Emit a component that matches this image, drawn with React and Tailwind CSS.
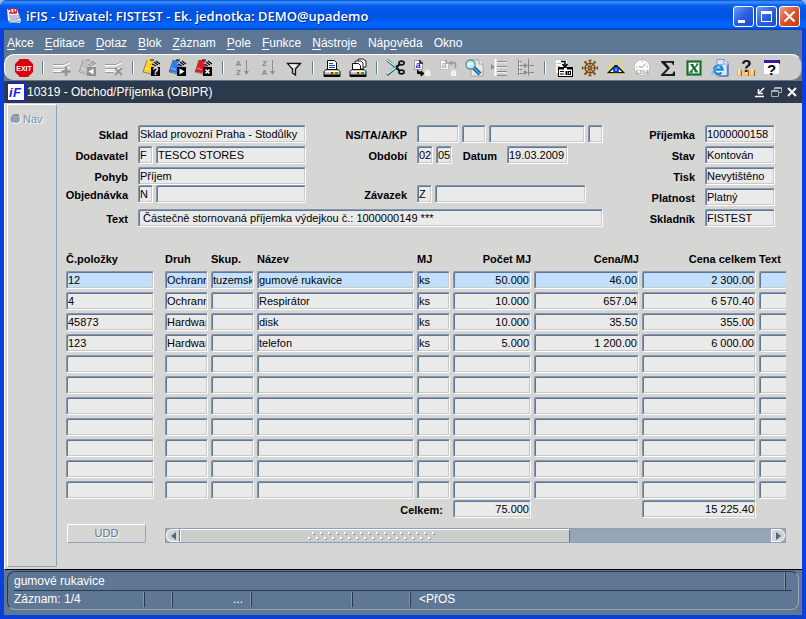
import React from 'react';

const menu = [
  ['', 'A', 'kce'],
  ['', 'E', 'ditace'],
  ['', 'D', 'otaz'],
  ['', 'B', 'lok'],
  ['', 'Z', 'áznam'],
  ['', 'P', 'ole'],
  ['', 'F', 'unkce'],
  ['', 'N', 'ástroje'],
  ['Náp', 'o', 'věda'],
  ['Okno', '', ''],
];

const rows = [
  ['12', 'Ochranné', 'tuzemsko', 'gumové rukavice', 'ks', '50.000', '46.00', '2 300.00', ''],
  ['4', 'Ochranné', '', 'Respirátor', 'ks', '10.000', '657.04', '6 570.40', ''],
  ['45873', 'Hardware', '', 'disk', 'ks', '10.000', '35.50', '355.00', ''],
  ['123', 'Hardware', '', 'telefon', 'ks', '5.000', '1 200.00', '6 000.00', ''],
  ...Array.from({ length: 7 }, () => ['', '', '', '', '', '', '', '', '']),
];

const columns = ['Č.položky', 'Druh', 'Skup.', 'Název', 'MJ', 'Počet MJ', 'Cena/MJ', 'Cena celkem', 'Text'];

const fieldClass =
  'block h-[18px] min-w-0 rounded-[2px] border border-t-[#8797ab] border-l-[#8797ab] border-r-white border-b-white px-px text-[11px] leading-[14px] text-black outline-none shadow-[inset_1px_1px_0_#5f7897,inset_-1px_-1px_0_#c9c9c9]';

function Field({ className = '', blue = false, ...props }) {
  return <input readOnly className={`${fieldClass} ${blue ? 'bg-[#c2dffb]' : 'bg-[#ebeaeb]'} ${className}`} {...props} />;
}

function Label({ className = '', ...props }) {
  return <label className={`block shrink-0 pt-[3px] text-right text-[11px] leading-[15px] font-bold whitespace-nowrap ${className}`} {...props} />;
}

function Svg({ children, size = 20, className = '' }) {
  return (
    <svg width={size} height={size} viewBox="0 0 20 20" className={`block shrink-0 ${className}`} aria-hidden="true">
      {children}
    </svg>
  );
}

const glyph = { fontFamily: '"Liberation Sans", Arial, sans-serif', fontWeight: 700 };

const ExitIcon = () => (
  <Svg>
    <path d="M6 1h8l5 5v8l-5 5H6l-5-5V6z" fill="#d9000f" />
    <text x="10" y="12.500" fontSize="7" textAnchor="middle" fill="#fff" style={glyph}>EXIT</text>
  </Svg>
);

function RecordIcon({ cross }) {
  return (
    <Svg>
      <path d="M1 7h12l5-3v9l-6 2H1z" fill="#dcdcdc" />
      <path d="M1 6.500h11l6-3M1 10.500h10l7-3M1 14.500h9" stroke="#9a9a9a" fill="none" />
      <path d="M1 7.500h11l6-3M1 11.500h10l7-3" stroke="#fff" fill="none" />
      <path d="M1 13h9v1H1z" fill="#fff" />
      {cross ? (
        <path d="M11 10l7 7M18 10l-7 7" stroke="#929292" strokeWidth="2" />
      ) : (
        <path d="M14 9v9M9.500 13.500h9" stroke="#929292" strokeWidth="2.500" />
      )}
    </Svg>
  );
}

function FolderIcon({ color, mark, disabled }) {
  const ink = disabled ? '#8f8f8f' : '#000';
  const edge = disabled ? '#8f8f8f' : '#6a5f48';
  return (
    <Svg>
      <path d="M5 2h5l8 5v2h-8l-1 6-8-1z" fill={color} />
      <path d="M5 2L1 14l8 2" fill="none" stroke={edge} strokeWidth="0.700" />
      <path d="M9 6l3-3 5 1 2 3v2h-6z" fill={disabled ? '#d8d8d8' : '#c9c9c9'} />
      <path d="M8 2h4M12 4l4 3M14 3l4 3M10 6l4 2" stroke={ink} strokeWidth="1.100" />
      <path d="M3 10l5 2" stroke="#fff" strokeWidth="0.900" opacity="0.600" />
      <rect x="9" y="9" width="9" height="9" fill={ink} shapeRendering="crispEdges" />
      {mark === '?' && <text x="13.500" y="17" fontSize="10" textAnchor="middle" fill="#fff" style={glyph}>?</text>}
      {mark === 'right' && <path d="M11.500 10.500l5 3-5 3z" fill="#fff" />}
      {mark === 'left' && <path d="M15.500 10.500l-5 3 5 3z" fill="#fff" />}
      {mark === 'x' && <path d="M11.500 11.500l4 4M15.500 11.500l-4 4" stroke="#fff" strokeWidth="1.500" />}
    </Svg>
  );
}

function SortIcon({ top, bottom }) {
  return (
    <Svg>
      <g fill="#858585" style={glyph} fontSize="8">
        <text x="6.500" y="7.500" textAnchor="middle">{top}</text>
        <text x="6.500" y="17" textAnchor="middle">{bottom}</text>
      </g>
      <path d="M14 2h1v11h2l-2.500 4-2.500-4h2z" fill="#8e8e8e" />
    </Svg>
  );
}

const FilterIcon = () => (
  <Svg>
    <path d="M3.500 5.500h13l-5 5.500v6l-3-2v-4z" fill="#d8d8d8" stroke="#111" strokeWidth="1.300" />
    <path d="M5 6.500h8L9 10z" fill="#fff" />
  </Svg>
);

function PrinterIcon({ stack }) {
  return (
    <Svg>
      {stack && <path d="M10 1h5l3 2v6h-6z" fill="#fff" stroke="#222" />}
      {stack && <path d="M7 3h6l2 2v6H8z" fill="#fff" stroke="#222" />}
      <path d={stack ? 'M4.500 5.500h6l2 2v5h-8z' : 'M5.500 2.500h7l2 2v8h-9z'} fill="#fff" stroke="#111" />
      {!stack && <path d="M7 5.500h4M7 7.500h6M7 9.500h6" stroke="#2a3bd0" />}
      <path d="M4 11.500h12l2 2v5H2v-5z" fill="#c6c6c6" stroke="#111" />
      <path d="M3 13.500h14" stroke="#fff" />
      <rect x="9" y="14" width="2" height="2" fill="#e00" />
      <rect x="11" y="14" width="2" height="2" fill="#ee0" />
      <rect x="13" y="14" width="3" height="2" fill="#0b0" />
      <path d="M2 17.500h16" stroke="#000" strokeWidth="2" />
    </Svg>
  );
}

const CutIcon = () => (
  <Svg>
    <path d="M1 2l11 9M1 17L12 8" stroke="#1d6b6b" strokeWidth="2.800" />
    <path d="M1 2l11 8M1 16l11-8" stroke="#d6ffff" strokeWidth="1.300" />
    <path d="M10 9.500l4-3.500M10 9.500l4 3.500" stroke="#111" strokeWidth="2.200" />
    <ellipse cx="15.500" cy="5" rx="2.600" ry="1.900" fill="none" stroke="#111" strokeWidth="1.600" />
    <ellipse cx="15.500" cy="14" rx="2.600" ry="1.900" fill="none" stroke="#111" strokeWidth="1.600" />
  </Svg>
);

function CopyIcon({ disabled }) {
  return (
    <Svg>
      <path d="M2.500 2.500h6l2 2v7h-8z" fill="#fff" stroke={disabled ? '#bbb' : '#999'} />
      <path d="M8 2v3h3" fill="none" stroke={disabled ? '#999' : '#111'} strokeWidth="1.500" />
      <text x="6" y="10" fontSize="9" textAnchor="middle" fill={disabled ? '#a8a8a8' : '#1420ff'} style={glyph}>a</text>
      {disabled ? (
        <path d="M17.500 10V5h-5M14 3l-2 2 2 2" fill="none" stroke="#999" strokeWidth="1.500" />
      ) : (
        <path d="M5.500 12v3.500h5M9 13l3 2.500L9 18z" fill="#000" stroke="#000" />
      )}
      <text x="15.500" y="18" fontSize="10" textAnchor="middle" fill="#fff" style={glyph}>a</text>
    </Svg>
  );
}

const FindIcon = () => (
  <Svg>
    <path d="M7 2h8l4 4v12H7z" fill="#e9e7df" stroke="#9a9a92" strokeWidth="0.800" />
    <path d="M15 2v4h4" fill="#fff" stroke="#999" />
    <path d="M9 9l7 7" stroke="#125a9c" strokeWidth="4" />
    <path d="M9 9l7 7" stroke="#49aaf0" strokeWidth="1.500" />
    <circle cx="6.500" cy="6.500" r="4.500" fill="#bdf0fa" stroke="#5b8c9a" strokeWidth="1.300" />
    <path d="M4 6h5" stroke="#fff" strokeWidth="2" />
  </Svg>
);

const IndentIcon = () => (
  <Svg>
    <path d="M5.500 1v17" stroke="#fff" strokeWidth="2" />
    <path d="M1 6l4 3-4 3z" fill="#929292" />
    <path d="M7 3.500h10M7 8.500h10M7 13.500h10M7 17.500h10" stroke="#8a8a8a" />
    <path d="M7 4.500h10M7 9.500h10M7 14.500h10" stroke="#eee" />
  </Svg>
);

const LevelsIcon = () => (
  <Svg>
    <path d="M2.500 1v17M12.500 1v17" stroke="#8a8a8a" />
    <path d="M3.500 1v17" stroke="#eee" />
    <path d="M3 3.500h3M3 7.500h5M3 11.500h3M3 15.500h5M13 7.500h5M13 14.500h5" stroke="#8a8a8a" />
    <path d="M8 5l4 2.500L8 10zM8 12l4 2.500L8 17z" fill="#8a8a8a" />
  </Svg>
);

const ListIcon = () => (
  <Svg>
    <rect x="2" y="1" width="11" height="14" fill="#fff" />
    <path d="M1 1.500h12" stroke="#8bd3ee" />
    <path d="M3 5.500h4M3 8.500h3M3 11.500h1" stroke="#bbb" />
    <path d="M7 3.500h4v4M8.500 6l2.500 3 2.500-3" fill="none" stroke="#000" strokeWidth="1.500" />
    <rect x="4.500" y="9.500" width="14" height="9" fill="#fff" stroke="#000" />
    <path d="M5 10.500h5M13 10.500h5" stroke="#000" strokeWidth="2" />
    <path d="M6 13.500h4M6 16h4" stroke="#000" />
    <rect x="11.500" y="13" width="2" height="4" fill="#000" />
    <rect x="14.500" y="13.500" width="2" height="3" fill="none" stroke="#000" />
  </Svg>
);

const WheelIcon = () => (
  <Svg>
    <circle cx="10" cy="10" r="4.800" fill="none" stroke="#7b4d08" strokeWidth="1.600" />
    <path d="M10 2v16M2 10h16M5 4l10 12M15 4L5 16" stroke="#7b4d08" strokeWidth="1.100" />
    <path d="M8.500 2.500h3M8.500 17.500h3M2.500 8.500v3M17.500 8.500v3M4 4h2v2M16 4h-2v2M4 16h2v-2M16 16h-2v-2" fill="none" stroke="#7b4d08" strokeWidth="1.300" />
    <circle cx="10" cy="10" r="2" fill="#7b4d08" />
    <rect x="9.500" y="9.500" width="1" height="1" fill="#fff" />
  </Svg>
);

const EyeIcon = () => (
  <Svg>
    <path d="M10 2v3M5 4l2 3M15 4l-2 3M2 8l3 2M18 8l-3 2" stroke="#f0e020" strokeWidth="1.500" />
    <path d="M1 15l8-8h2l8 8z" fill="#111" />
    <path d="M4 14l4-4 2-1 2 1 4 4z" fill="#fff" />
    <circle cx="10" cy="11.500" r="3.200" fill="#1235dd" />
    <circle cx="10" cy="11.500" r="1.300" fill="#1ce0ff" />
    <path d="M1 15.500h18" stroke="#c8b400" strokeWidth="0.800" />
  </Svg>
);

const ClockIcon = () => (
  <Svg>
    <circle cx="10" cy="9.500" r="8" fill="#fbfbfb" stroke="#b9b9b9" />
    <path d="M10 9.500l4-4M10 9.500L7 8M10 3v1M4 9h1M15 9h1" stroke="#999" />
    <text x="10" y="16" fontSize="6" textAnchor="middle" fill="#999" style={glyph}>1314</text>
  </Svg>
);

const SumIcon = () => (
  <Svg>
    <path d="M3 3h13v4h-1.200q-.3-2.300-2-2.300H7.500L12 10l-5.500 6h7q1.500 0 2-2.500H17V18H3v-1.200L9 10.500 3 4z" fill="#1c1c1c" />
  </Svg>
);

const ExcelIcon = () => (
  <Svg>
    <rect x="3.500" y="3.500" width="13" height="13" fill="#fff" stroke="#17702a" strokeWidth="2.200" />
    <rect x="2.500" y="2.500" width="15" height="15" fill="none" stroke="#5c9c66" strokeDasharray="1 1" />
    <path d="M6 6h3l5 8h-3z" fill="#17702a" />
    <path d="M14 6l-3 3.500M9 11l-3 3h3" fill="none" stroke="#17702a" strokeWidth="1.300" />
    <path d="M12 6h2M11 14h3" stroke="#17702a" />
  </Svg>
);

const BrowserIcon = () => (
  <Svg>
    <path d="M7 1.500h7l4.500 4V18H7z" fill="#dfe6f4" stroke="#7d93c4" />
    <path d="M14 2v4h4" fill="#fff" stroke="#7d93c4" />
    <path d="M17.500 7v11H9" fill="none" stroke="#5e7cc0" strokeWidth="1.500" />
    <circle cx="8.500" cy="11.500" r="5" fill="#e8f6ff" />
    <path d="M4 11.500h8.500a4.200 4.200 0 1 0-1 3" fill="none" stroke="#1b83d2" strokeWidth="2.400" />
    <path d="M2.500 16.500q-2-1.500 4-7 5-4 7-3" fill="none" stroke="#5fb9ee" strokeWidth="1.300" />
  </Svg>
);

const HelpPeopleIcon = () => (
  <Svg>
    {[1, 8, 14].map((x) => (
      <g key={x}>
        <rect x={x} y="12" width="5" height="6" fill="#f2b45e" />
        <rect x={x + 1} y="11" width="2" height="6" fill="#ffe0ae" />
        <path d={`M${x + 4.5} 12v6`} stroke="#a66a16" />
      </g>
    ))}
    <text x="10.500" y="14" fontSize="17" textAnchor="middle" fill="#111" style={glyph}>?</text>
  </Svg>
);

const HelpWindowIcon = () => (
  <Svg>
    <rect x="2" y="2" width="15" height="14" fill="#fff" />
    <rect x="2" y="2" width="15" height="3" fill="#4314a8" />
    <path d="M17.500 2v4" stroke="#222" />
    <text x="9.500" y="17" fontSize="15" textAnchor="middle" fill="#000" style={glyph}>?</text>
  </Svg>
);

const toolGroups = [
  [['Konec', <ExitIcon />]],
  [
    ['Vložit záznam', <RecordIcon />],
    ['Předchozí', <FolderIcon color="#c0c0c0" mark="left" disabled />],
    ['Smazat záznam', <RecordIcon cross />],
  ],
  [
    ['Zadat dotaz', <FolderIcon color="#ffd21e" mark="?" />],
    ['Provést dotaz', <FolderIcon color="#2a7cf0" mark="right" />],
    ['Zrušit dotaz', <FolderIcon color="#e01828" mark="x" />],
  ],
  [
    ['Seřadit vzestupně', <SortIcon top="A" bottom="Z" />],
    ['Seřadit sestupně', <SortIcon top="Z" bottom="A" />],
    ['Filtr', <FilterIcon />],
  ],
  [
    ['Tisk', <PrinterIcon />],
    ['Tisk sestav', <PrinterIcon stack />],
  ],
  [
    ['Vyjmout', <CutIcon />],
    ['Kopírovat', <CopyIcon />],
    ['Vložit', <CopyIcon disabled />],
    ['Hledat', <FindIcon />],
    ['Seznam', <IndentIcon />],
    ['Úrovně', <LevelsIcon />],
  ],
  [
    ['Seznam hodnot', <ListIcon />],
    ['Navigace', <WheelIcon />],
    ['Zobrazit', <EyeIcon />],
    ['Kalendář', <ClockIcon />],
    ['Součet', <SumIcon />],
    ['Excel', <ExcelIcon />],
    ['Prohlížeč', <BrowserIcon />],
    ['Podpora', <HelpPeopleIcon />],
    ['Nápověda', <HelpWindowIcon />],
  ],
];

function TitleBar() {
  const button = 'flex h-[21px] w-[21px] items-center justify-center rounded-[3px] border border-white';
  return (
    <header className="flex h-[30px] shrink-0 items-center rounded-t-[7px] bg-[linear-gradient(180deg,#0a4fd0_0px,#3d95ff_2px,#0a62ee_5px,#0054e3_10px,#0055e5_18px,#0066ff_24px,#0062f5_27px,#0340b8_30px)] pt-[2px] pr-[6px] pl-[6px]">
      <svg width="16" height="16" viewBox="0 0 16 16" className="mr-[4px] block" aria-hidden="true">
        <path d="M1 1h10l2 6 2 5-1 3H4L2 12z" fill="#f3edf2" />
        <path d="M2 2q3-2 3 1t3 2M6 0q3 0 2 2t3 3M3 5h7M10 1q2 1 0 3" fill="none" stroke="#dc2233" strokeWidth="1.300" />
        <path d="M3 8h8M4 10h7M4 12h7" stroke="#7d90bd" />
        <path d="M11 8q4-1 2 2l-2 1M2 13q5 3 12 0" fill="none" stroke="#7a8fc8" strokeWidth="1.200" />
      </svg>
      <h1 className="grow truncate font-['Open_Sans','Noto_Sans',sans-serif] text-[13px] leading-[18px] font-semibold text-white [text-shadow:1px_1px_0_#0a2a80]">
        iFIS - Uživatel: FISTEST - Ek. jednotka: DEMO@upademo
      </h1>
      <div className="flex gap-[2px]">
        <button aria-label="Minimalizovat" className={`${button} bg-[linear-gradient(135deg,#6d9bf7,#2a5fe0_50%,#1c4fd0)]`}>
          <svg width="19" height="19" aria-hidden="true"><path d="M4 13h7v3H4z" fill="#fff" /></svg>
        </button>
        <button aria-label="Maximalizovat" className={`${button} bg-[linear-gradient(135deg,#6d9bf7,#2a5fe0_50%,#1c4fd0)]`}>
          <svg width="19" height="19" aria-hidden="true"><path d="M4 4h11v11H4zM5 7v7h9V7z" fill="#fff" fillRule="evenodd" /></svg>
        </button>
        <button aria-label="Zavřít" className={`${button} bg-[linear-gradient(135deg,#f09a80,#e0502a_50%,#c83a10)]`}>
          <svg width="19" height="19" aria-hidden="true"><path d="M4.500 4.500l10 10M14.500 4.500l-10 10" stroke="#fff" strokeWidth="2.200" /></svg>
        </button>
      </div>
    </header>
  );
}

function Toolbar() {
  return (
    <div className="flex h-[26px] shrink-0 items-center rounded-[10px] border-t border-l border-white border-r border-r-[#8c96a2] bg-[#cdcecc] pl-[6px]">
      {toolGroups.map((group, g) => (
        <React.Fragment key={g}>
          {g > 0 && <span className="mx-[5px] h-[13px] w-[2px] shrink-0 border-r border-l border-r-white border-l-[#5f7897]" />}
          {group.map(([name, icon]) => (
            <button key={name} aria-label={name} className="flex h-[22px] w-[26px] shrink-0 items-center justify-center">
              {icon}
            </button>
          ))}
        </React.Fragment>
      ))}
    </div>
  );
}

function FormTitle() {
  return (
    <div className="mt-px flex h-[22px] shrink-0 items-center bg-[#2c394d] pr-[4px] pl-[3px] text-white">
      <svg width="18" height="18" viewBox="0 0 18 18" className="mr-[2px] block" aria-hidden="true">
        <rect x="0.500" y="0.500" width="17" height="17" fill="#fff" stroke="#1a1aee" />
        <g fill="#1a1aee" fontStyle="italic" style={glyph}>
          <text x="2" y="14" fontSize="13">i</text>
          <text x="6" y="14" fontSize="13">F</text>
        </g>
      </svg>
      <h2 className="grow text-[12px] leading-[16px]">10319 - Obchod/Příjemka (OBIPR)</h2>
      <div className="flex gap-[4px]">
        <button aria-label="Sbalit">
          <svg width="12" height="12" className="block" aria-hidden="true"><path d="M1 10.500h9M10 2L5 7M4.500 3v4.500H9" fill="none" stroke="#fff" strokeWidth="1.500" /></svg>
        </button>
        <button aria-label="Obnovit">
          <svg width="12" height="12" className="block" aria-hidden="true"><path d="M4.500 4V1.500h7v5H9M1.500 4.500h7v6h-7zM4 2.500h7M1 5.500h7" fill="none" stroke="#a9adb4" /></svg>
        </button>
        <button aria-label="Zavřít formulář">
          <svg width="12" height="12" className="block" aria-hidden="true"><path d="M2 2l8 8M10 2l-8 8" stroke="#fff" strokeWidth="1.800" /></svg>
        </button>
      </div>
    </div>
  );
}

function HeaderForm() {
  const gap = 'flex gap-[3px]';
  return (
    <form className="flex items-start pr-[11px]">
      <div>
        <div className="mb-[3px] flex">
          <Label htmlFor="sklad" className="mr-[10px] w-[64px]">Sklad</Label>
          <Field id="sklad" className="w-[168px]" defaultValue="Sklad provozní Praha - Stodůlky" />
          <Label htmlFor="ns" className="mr-[10px] w-[101px]">NS/TA/A/KP</Label>
          <div className={gap}>
            <Field id="ns" className="w-[42px]" />
            <Field aria-label="TA" className="w-[24px]" />
            <Field aria-label="A" className="w-[96px]" />
            <Field aria-label="KP" className="w-[15px]" />
          </div>
        </div>
        <div className="mb-[3px] flex">
          <Label htmlFor="dodavatel" className="mr-[10px] w-[64px]">Dodavatel</Label>
          <div className={gap}>
            <Field id="dodavatel" className="w-[15px]" defaultValue="F" />
            <Field aria-label="Název dodavatele" className="w-[150px]" defaultValue="TESCO STORES" />
          </div>
          <Label htmlFor="obdobi" className="mr-[10px] w-[101px]">Období</Label>
          <div className={gap}>
            <Field id="obdobi" className="w-[16px]" defaultValue="02" />
            <Field aria-label="Rok období" className="w-[16px]" defaultValue="05" />
          </div>
          <Label htmlFor="datum" className="mr-[10px] w-[45px]">Datum</Label>
          <Field id="datum" className="w-[61px]" defaultValue="19.03.2009" />
        </div>
        <div className="flex">
          <Label htmlFor="pohyb" className="mr-[10px] w-[64px]">Pohyb</Label>
          <Field id="pohyb" className="w-[168px]" defaultValue="Příjem" />
        </div>
        <div className="mb-[6px] flex">
          <Label htmlFor="objednavka" className="mr-[10px] w-[64px]">Objednávka</Label>
          <div className={gap}>
            <Field id="objednavka" className="w-[15px]" defaultValue="N" />
            <Field aria-label="Číslo objednávky" className="w-[150px]" />
          </div>
          <Label htmlFor="zavazek" className="mr-[10px] w-[101px]">Závazek</Label>
          <div className={gap}>
            <Field id="zavazek" className="w-[15px]" defaultValue="Z" />
            <Field aria-label="Číslo závazku" className="w-[151px]" />
          </div>
        </div>
        <div className="flex">
          <Label htmlFor="text" className="mr-[10px] w-[64px]">Text</Label>
          <Field id="text" className="w-[465px] pl-[4px]" defaultValue="Částečně stornovaná příjemka výdejkou č.: 1000000149 ***" />
        </div>
      </div>
      <div className="ml-auto flex flex-col gap-[3px]">
        {[
          ['Příjemka', '1000000158'],
          ['Stav', 'Kontován'],
          ['Tisk', 'Nevytištěno'],
          ['Platnost', 'Platný'],
          ['Skladník', 'FISTEST'],
        ].map(([name, value]) => (
          <div key={name} className="flex justify-end gap-[10px]">
            <Label htmlFor={name}>{name}</Label>
            <Field id={name} className="w-[70px]" defaultValue={value} />
          </div>
        ))}
      </div>
    </form>
  );
}

function ItemsTable() {
  const isNumber = (i) => i >= 5 && i <= 7;
  return (
    <div className="mt-[25px] overflow-hidden pl-[2px]">
      <table className="w-full table-fixed border-separate border-spacing-0">
        <colgroup>
          <col className="w-[99px]" />
          <col className="w-[46px]" />
          <col className="w-[46px]" />
          <col />
          <col className="w-[36px]" />
          <col className="w-[81px]" />
          <col className="w-[108px]" />
          <col className="w-[117px]" />
          <col className="w-[27px]" />
        </colgroup>
        <thead>
          <tr>
            {columns.map((c, i) => (
              <th key={c} scope="col" className={`p-0 pb-[4px] text-[11px] leading-[15px] font-bold whitespace-nowrap ${isNumber(i) ? 'pr-[3px] text-right' : 'text-left'}`}>
                {c}
              </th>
            ))}
          </tr>
        </thead>
        <tbody>
          {rows.map((row, r) => (
            <tr key={r} className="[&:last-child>td]:pb-px">
              {row.map((value, i) => (
                <td key={i} className={`p-0 pb-[3px] ${i === 0 ? 'pr-[11px]' : i < 8 ? 'pr-[3px]' : ''}`}>
                  <Field
                    aria-label={`${columns[i]} ${r + 1}`}
                    blue={r === 0}
                    className={i === 8 ? 'w-[40px]' : isNumber(i) ? 'w-full text-right' : 'w-full'}
                    defaultValue={value}
                  />
                </td>
              ))}
            </tr>
          ))}
        </tbody>
        <tfoot>
          <tr>
            <td colSpan={5} className="p-0 pr-[10px]">
              <Label htmlFor="pocet-celkem">Celkem:</Label>
            </td>
            <td className="p-0 pr-[3px]">
              <Field id="pocet-celkem" className="w-full text-right" defaultValue="75.000" />
            </td>
            <td />
            <td className="p-0 pr-[3px]">
              <Field aria-label="Cena celkem" className="w-full text-right" defaultValue="15 225.40" />
            </td>
            <td />
          </tr>
        </tfoot>
      </table>
    </div>
  );
}

function ScrollBar() {
  const arrow = 'flex h-full w-[14px] shrink-0 items-center justify-center border border-white bg-[#d2d3d2]';
  return (
    <div className="flex h-[15px] grow border border-[#8ea0b9] bg-[#96a4b7]">
      <button aria-label="Posunout vlevo" className={`${arrow} rounded-l-[6px] border-r-[#5f7897]`}>
        <svg width="5" height="8" aria-hidden="true"><path d="M5 0v8L0 4z" fill="#4d6786" /></svg>
      </button>
      <div className="flex basis-[63%] items-center justify-center border-t border-r border-l border-t-white border-r-[#5f7897] border-l-white bg-[#cccdcb]">
        <svg width="134" height="9" aria-hidden="true">
          {Array.from({ length: 32 }, (_, i) => (
            <g key={i}>
              <rect x={1 + i * 4} y={i % 2 ? 1 : 6} width="2" height="2" fill="#8d9cb0" />
              <rect x={i * 4} y={i % 2 ? 0 : 5} width="2" height="2" fill="#fff" />
            </g>
          ))}
        </svg>
      </div>
      <button aria-label="Posunout vpravo" className={`${arrow} ml-auto rounded-r-[6px]`}>
        <svg width="5" height="8" aria-hidden="true"><path d="M0 0v8l5-4z" fill="#4d6786" /></svg>
      </button>
    </div>
  );
}

function StatusBar() {
  const line = 'border-r border-r-[#2c394d] shadow-[inset_-1px_0_0_#8196ae]';
  return (
    <footer className="shrink-0 bg-[#5d7795] px-[3px] pt-px pb-[5px] text-[12px] leading-[15px] text-white">
      <div className="rounded-[8px] border border-t-[#2c394d] border-r-[#9aa6b3] border-b-[#9aa6b3] border-l-[#2c394d] px-[6px]">
        <div className="flex h-[19px] border-b border-[#2c394d]">
          <span className={`mr-[6px] grow pt-[2px] ${line}`}>gumové rukavice</span>
        </div>
        <div className="flex h-[18px] pt-px pb-[2px]">
          <span className={`w-[131px] ${line}`}>Záznam: 1/4</span>
          <span className={`w-[28px] ${line}`} />
          <span className={`w-[79px] pr-[8px] text-right ${line}`}>...</span>
          <span className={`w-[101px] ${line}`} />
          <span className={`w-[58px] ${line}`} />
          <span className="pl-[8px]">&lt;PřOS</span>
        </div>
      </div>
    </footer>
  );
}

export default function App() {
  return (
    <div className="min-h-screen bg-[#9db8e8] font-['Liberation_Sans',Arial,sans-serif] text-black">
      <div className="flex min-h-screen flex-col rounded-t-[7px] bg-[#0a3fdc]">
        <TitleBar />
        <div className="mx-[4px] mb-[4px] flex grow flex-col bg-[#5d7795]">
          <nav className="flex h-[24px] shrink-0 items-center gap-[11px] pt-[2px] pl-[3px] text-[12px] leading-[16px] text-white">
            {menu.map(([before, key, after]) => (
              <button key={before + key + after}>
                {before}
                <span className="underline underline-offset-2">{key}</span>
                {after}
              </button>
            ))}
          </nav>
          <Toolbar />
          <FormTitle />
          <main className="flex grow items-stretch border-b border-l border-b-black border-l-white bg-[#d6d6d5] pr-[16px]">
            <aside className="mt-px mb-[2px] ml-[2px] w-[50px] shrink-0 rounded-[2px] border border-t-white border-r-[#8fa1ba] border-b-[#8fa1ba] border-l-white px-[3px] pt-[6px]">
              <label className="flex items-center gap-[2px] text-[11px] leading-[16px] text-[#8090a8] [text-shadow:1px_1px_0_#fff]">
                <input type="radio" disabled className="h-[10px] w-[10px] appearance-none rounded-full border border-[#707f92] border-r-white border-b-white bg-[#93a1b4]" />
                Nav
              </label>
            </aside>
            <div className="min-w-0 grow pt-[22px] pl-[7px]">
              <HeaderForm />
              <ItemsTable />
              <div className="mt-[6px] flex items-end gap-[19px] pl-[3px]">
                <button disabled className="h-[19px] w-[79px] shrink-0 rounded-[2px] border border-t-white border-r-[#8fa1ba] border-b-[#8fa1ba] border-l-white text-[11px] leading-[15px] text-[#5f7590] [text-shadow:1px_1px_0_#fff]">
                  UDD
                </button>
                <ScrollBar />
              </div>
            </div>
          </main>
          <StatusBar />
        </div>
      </div>
    </div>
  );
}
